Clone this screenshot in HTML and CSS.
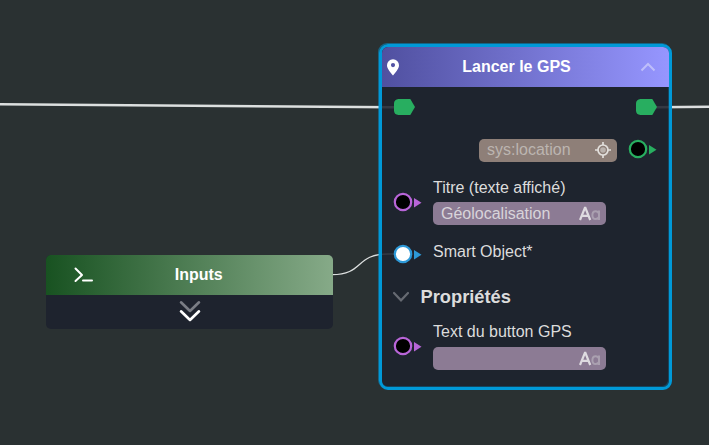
FILE: index.html
```html
<!DOCTYPE html>
<html lang="fr">
<head>
<meta charset="utf-8">
<title>Lancer le GPS</title>
<link rel="stylesheet" href="styles.css">
</head>
<body>
<main class="canvas">
  <svg class="wires" width="709" height="445" viewBox="0 0 709 445">
    <path class="wire wire-flow" d="M0 104.3L394 107.3M656 107.3L709 106.7"/>
    <path class="wire wire-data" d="M332 274.7C364 274.7 355 254 388 254H396"/>
  </svg>

  <section class="node inputs-node">
    <header class="inputs-head">
      <svg class="prompt" width="20" height="16" viewBox="0 0 20 16"><path d="M1.5 1.5L8 8L1.5 14M9 13.6H18"/></svg>
      <h2 class="title">Inputs</h2>
    </header>
    <div class="inputs-body">
      <svg class="expand" width="24" height="24" viewBox="0 0 24 24"><path class="dim" d="M3 3.3L12 12L21 3.3"/><path d="M3 12.3L12 21L21 12.3"/></svg>
    </div>
  </section>

  <section class="node gps-node">
    <header class="gps-head">
      <svg class="pin" width="12" height="17" viewBox="0 0 12 17"><path fill-rule="evenodd" d="M6 .2A6 6 0 0 0 0 6.2C0 10 3.8 13.4 6 16.6C8.2 13.4 12 10 12 6.2A6 6 0 0 0 6 .2ZM6 4A2.1 2.1 0 1 1 6 8.2A2.1 2.1 0 1 1 6 4Z"/></svg>
      <h2 class="title">Lancer le GPS</h2>
      <svg class="collapse" width="16" height="10" viewBox="0 0 16 10"><path d="M1.5 8.5L8 2L14.5 8.5"/></svg>
    </header>
    <div class="flow-row">
      <svg width="22" height="16" viewBox="0 0 22 16"><path class="flow-port" d="M4.5 0H16.3L21 8L16.3 16H4.5Q0 15.5 0 11.5V4.5Q0 .5 4.5 0Z"/></svg>
      <svg width="22" height="16" viewBox="0 0 22 16"><path class="flow-port" d="M4.5 0H16.3L21 8L16.3 16H4.5Q0 15.5 0 11.5V4.5Q0 .5 4.5 0Z"/></svg>
    </div>
    <div class="output-row">
      <div class="field location">
        <span>sys:location</span>
        <svg width="16" height="16" viewBox="0 0 16 16"><circle class="target-core" cx="8" cy="8" r="2.8"/><circle class="target-ring" cx="8" cy="8" r="5"/><path class="target-ring" d="M8 0V3M8 13V16M0 8H3M13 8H16"/></svg>
      </div>
      <svg class="port green" width="29" height="20" viewBox="0 0 29 20"><circle cx="10" cy="10" r="8.2"/><path d="M21 6L28.5 10.7L21 15.4Z"/></svg>
    </div>
    <div class="input-row title-row">
      <svg class="port purple" width="29" height="20" viewBox="0 0 29 20"><circle cx="10" cy="10" r="8.2"/><path d="M21 6L28.5 10.7L21 15.4Z"/></svg>
      <div class="entry">
        <span class="label">Titre (texte affiché)</span>
        <div class="field text"><span>Géolocalisation</span><svg class="aa" width="22" height="15" viewBox="0 0 22 15"><path class="cap" d="M1 14L5.9 1.8H6.4L11.2 14M3 9.8H9.3"/><path class="small" d="M20 4.5V14M20 7.500Q19 5.200 16.600 5.200Q13.400 5.200 13.400 9.200Q13.400 13 16.600 13Q19 13 20 11"/></svg></div>
      </div>
    </div>
    <div class="input-row object-row">
      <svg class="port blue" width="29" height="20" viewBox="0 0 29 20"><circle cx="10" cy="10" r="8.2"/><path d="M21 6L28.5 10.7L21 15.4Z"/></svg>
      <span class="label">Smart Object*</span>
    </div>
    <div class="props-row">
      <svg class="chevron" width="18" height="12" viewBox="0 0 18 12"><path d="M2 2L9 9.3L16 2"/></svg>
      <h3 class="props-title">Propriétés</h3>
    </div>
    <div class="input-row button-row">
      <svg class="port purple" width="29" height="20" viewBox="0 0 29 20"><circle cx="10" cy="10" r="8.2"/><path d="M21 6L28.5 10.7L21 15.4Z"/></svg>
      <div class="entry">
        <span class="label">Text du button GPS</span>
        <div class="field text"><span></span><svg class="aa" width="22" height="15" viewBox="0 0 22 15"><path class="cap" d="M1 14L5.9 1.8H6.4L11.2 14M3 9.8H9.3"/><path class="small" d="M20 4.5V14M20 7.5Q19 5.2 16.6 5.2Q13.4 5.2 13.4 9.2Q13.4 13 16.6 13Q19 13 20 11"/></svg></div>
      </div>
    </div>
  </section>
</main>
</body>
</html>
```

FILE: styles.css
```css
* { box-sizing: border-box; }
body { margin: 0; background: #2a3132; }
svg { display: block; flex: none; fill: none; }
h2, h3 { margin: 0; }
.canvas {
  position: relative;
  width: 709px;
  height: 445px;
  overflow: hidden;
  background: #2a3132;
  color: #dcdcdc;
  font: 16px/20px "Liberation Sans", Arial, sans-serif;
}
.wires { position: absolute; inset: 0; }
.wire { stroke: #dcdfdf; }
.wire-flow { stroke-width: 2.4; }
.wire-data { stroke-width: 1.3; }
.node { position: absolute; overflow: hidden; background: rgba(29, 34, 45, .88); }
.title { font-size: 16px; line-height: 20px; font-weight: bold; color: #fff; text-align: center; }

.inputs-node { left: 46px; top: 255px; width: 286.5px; height: 74px; border-radius: 5px; background: #1e232e; }
.inputs-head {
  display: grid;
  grid-template-columns: 66px 1fr 46px;
  align-items: center;
  height: 39.5px;
  background: linear-gradient(90deg, #185221, #86aa88);
}
.inputs-head .title { padding-right: 1px; }
.prompt { margin-left: 28px; stroke: #fff; stroke-width: 2; stroke-linecap: round; stroke-linejoin: round; }
.inputs-body { display: flex; justify-content: center; padding: 4.5px 0 0 1px; }
.expand { stroke: #fff; stroke-width: 2.6; stroke-linecap: round; stroke-linejoin: round; }
.dim { stroke: #7a7d85; }

.gps-node {
  left: 379px;
  top: 44px;
  width: 293px;
  height: 346px;
  border: 3px solid #0099d8;
  border-radius: 9px;
  box-shadow: -1px -1px 0 rgba(0, 153, 216, .5), inset -1px -1px 0 rgba(0, 153, 216, .3);
}
.gps-head {
  display: grid;
  grid-template-columns: 32px 1fr 34px;
  align-items: center;
  height: 40px;
  background: linear-gradient(90deg, #5050a0, #9696ff);
}
.gps-head .title { padding-right: 16px; }
.pin { margin-left: 5px; fill: #fff; }
.collapse { stroke: #bebefa; stroke-width: 2; margin-left: 5px; }
.flow-row { display: flex; justify-content: space-between; padding: 12px 11px 0 12px; }
.flow-port { fill: #28ae60; }
.output-row { display: flex; justify-content: flex-end; align-items: center; gap: 11px; margin-top: 23.5px; padding-right: 12px; }
.output-row .port { margin-top: -2px; }
.field { display: flex; align-items: center; justify-content: space-between; height: 23px; border-radius: 5px; }
.location { width: 138px; padding: 0 6px 0 8px; background: #8e7f78; color: #bcb5b0; }
.target-core { fill: #bab2ad; }
.target-ring { stroke: #e2dfdc; stroke-width: 1.7; }
.port circle { fill: #000; stroke-width: 2.2; }
.green circle { stroke: #28ae60; }
.green path { fill: #28ae60; }
.purple circle { stroke: #b865d8; }
.purple path { fill: #b865d8; }
.blue circle { fill: #fff; stroke: #2d99d8; }
.blue path { fill: #2d99d8; }
.input-row { display: flex; gap: 11.500px; padding-left: 10.500px; }
.title-row { margin-top: 16.5px; }
.title-row .port { margin-top: 14px; }
.button-row .port { margin-top: 14.5px; }
.label { display: block; }
.text { width: 172.5px; margin-top: 4px; padding: 0 4.5px 0 8px; background: #8c7b94; color: #d8d4da; }
.button-row .text { margin-top: 5px; }
.aa .cap { stroke: #dedbe0; stroke-width: 2.2; }
.aa .small { stroke: #aaa0b0; stroke-width: 2; }
.object-row { margin-top: 17px; height: 20px; }
.object-row .port { margin-top: 1.5px; }
.props-row { display: flex; align-items: center; gap: 11px; margin-top: 23px; padding-left: 9.5px; height: 24px; }
.chevron { stroke: #666a72; stroke-width: 2.2; stroke-linecap: round; }
.props-title { font-size: 18.3px; line-height: 24px; font-weight: bold; }
.button-row { margin-top: 12.5px; }
```
